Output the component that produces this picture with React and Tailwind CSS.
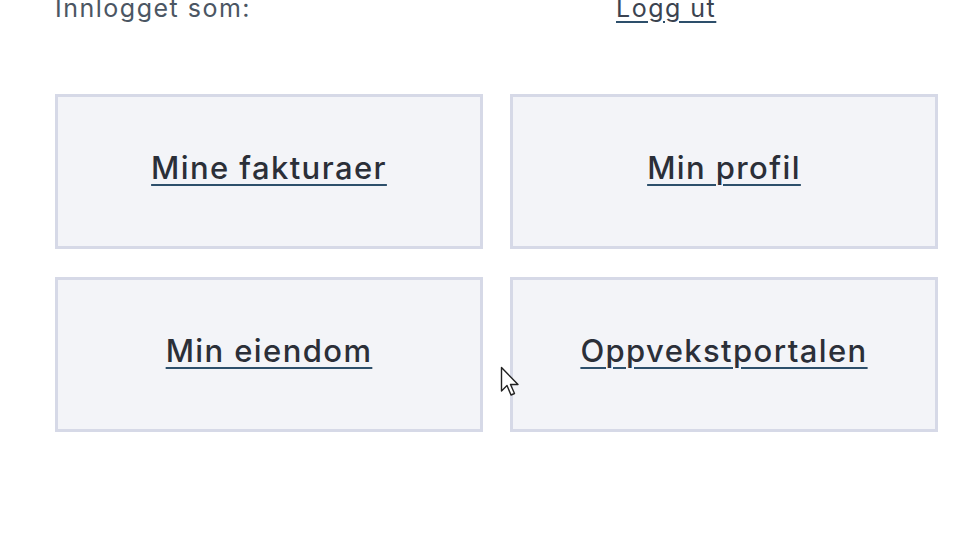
const tiles = ["Mine fakturaer", "Min profil", "Min eiendom", "Oppvekstportalen"];

function Cursor() {
  return (
    <svg
      width="22"
      height="34"
      viewBox="0 0 22 34"
      className="absolute left-[500px] top-[366px] pointer-events-none"
    >
      <path
        d="M1.5 1.5 L1.5 25 L7 19.5 L11 29 L14.5 27.5 L10.5 18.5 L18 18.5 Z"
        fill="#fff"
        stroke="#222"
        strokeWidth="1.4"
        strokeLinejoin="round"
      />
    </svg>
  );
}

export default function App() {
  return (
    <div className="relative h-[538px] w-[956px] overflow-hidden bg-white font-['Inter',sans-serif]">
      <div className="-mt-[9px] pl-[55px] w-[938px]">
        <div className="flex h-[34px] items-center text-[25px] leading-none tracking-[0.06em]">
          <span className="w-[561px] text-[#4b5663]">Innlogget som:</span>
          <a href="#" className="text-[#3b4350] underline decoration-[#2d4f6b] underline-offset-4">
            Logg ut
          </a>
        </div>

        <div className="mt-[69px] grid grid-cols-[428px_428px] gap-x-[27px] gap-y-[28px]">
          {tiles.map((t) => (
            <div
              key={t}
              className="flex h-[155px] items-center justify-center border-[3px] border-[#d6d9e7] bg-[#f3f4f8] pb-[6px]"
            >
              <a
                href="#"
                className="text-[31px] font-medium tracking-[0.045em] text-[#2b2f38] underline decoration-[#2d4f6b] decoration-2 underline-offset-[5px]"
              >
                {t}
              </a>
            </div>
          ))}
        </div>
      </div>
      <Cursor />
    </div>
  );
}
